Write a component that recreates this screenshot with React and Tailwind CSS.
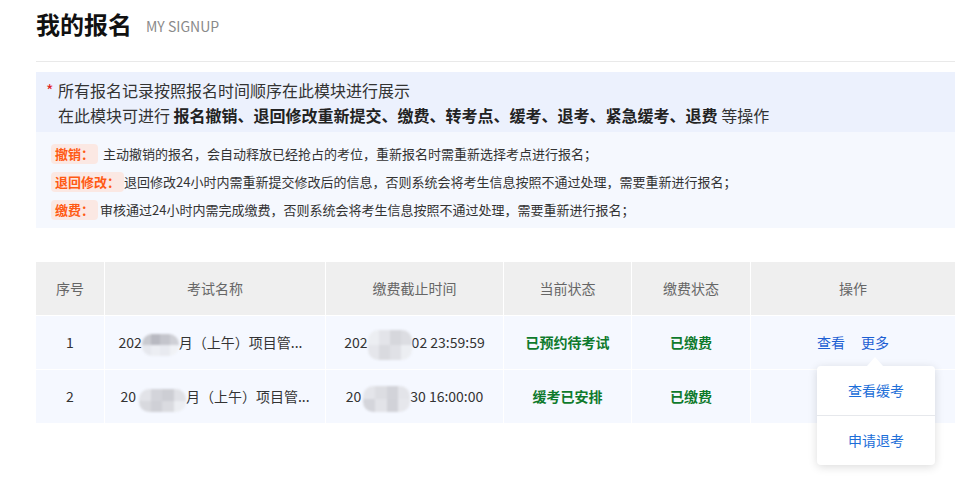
import React from "react";

function Blur({ w, h, cells, className = "" }) {
  return (
    <span
      className={"inline-flex flex-col overflow-hidden rounded-[10px] align-middle blur-[1px] " + className}
      style={{ width: w, height: h }}
    >
      {cells.map((row, i) => (
        <span key={i} className="flex flex-1">
          {row.map((c, j) => (
            <span key={j} className="flex-1" style={{ background: c }} />
          ))}
        </span>
      ))}
    </span>
  );
}

const cols = "grid grid-cols-[68px_221px_178px_128px_119px_205px]";

function Cell({ children, first, className = "" }) {
  return (
    <div
      className={
        "flex items-center justify-center whitespace-nowrap " +
        (first ? "" : "border-l border-white ") +
        className
      }
    >
      {children}
    </div>
  );
}

export default function App() {
  return (
    <div className="min-h-[497px] bg-white pl-[36px] font-['Noto_Sans_CJK_SC',sans-serif] text-[#333]">
      <div className="w-[919px]">
        <div className="flex h-[62px] items-start border-b border-[#e9e9e9] pt-[6px]">
          <h1 className="text-[24px] font-bold leading-[36px] text-[#111]">我的报名</h1>
          <span className="ml-[14px] mt-[2px] text-[14px] leading-[36px] text-[#8a8a8a]">MY SIGNUP</span>
        </div>

        <div className="mt-[10px]">
          <div className="h-[60px] bg-[#ecf1fd] pl-[10px] pt-[6px] text-[16px] leading-[25px] text-[#333]">
            <div className="flex">
              <span className="w-[12px] text-[#e02424]">*</span>
              <span>所有报名记录按照报名时间顺序在此模块进行展示</span>
            </div>
            <div className="pl-[12px]">
              在此模块可进行{" "}
              <span className="font-bold text-[#222]">
                报名撤销、退回修改重新提交、缴费、转考点、缓考、退考、紧急缓考、退费
              </span>{" "}
              等操作
            </div>
          </div>
          <div className="h-[96px] bg-[#f5f8fe] pl-[15px] pt-[8px] text-[13px] leading-[28px] text-[#333]">
            <div className="flex items-center">
              <span className="mr-[5px] inline-block h-[20px] rounded-[4px] bg-[#fbe8e3] px-[4px] text-[13px] font-bold leading-[20px] text-[#ff5a14]">
                撤销：
              </span>
              <span>主动撤销的报名，会自动释放已经抢占的考位，重新报名时需重新选择考点进行报名；</span>
            </div>
            <div className="flex items-center">
              <span className="inline-block h-[20px] rounded-[4px] bg-[#fbe8e3] px-[4px] text-[13px] font-bold leading-[20px] text-[#ff5a14]">
                退回修改：
              </span>
              <span>退回修改24小时内需重新提交修改后的信息，否则系统会将考生信息按照不通过处理，需要重新进行报名；</span>
            </div>
            <div className="flex items-center">
              <span className="mr-[2px] inline-block h-[20px] rounded-[4px] bg-[#fbe8e3] px-[4px] text-[13px] font-bold leading-[20px] text-[#ff5a14]">
                缴费：
              </span>
              <span>审核通过24小时内需完成缴费，否则系统会将考生信息按照不通过处理，需要重新进行报名；</span>
            </div>
          </div>
        </div>

        <div className="relative mt-[34px] text-[14px]">
          <div className={cols + " h-[53px] bg-[#efefef] text-[#666]"}>
            <Cell first>序号</Cell>
            <Cell>考试名称</Cell>
            <Cell>缴费截止时间</Cell>
            <Cell>当前状态</Cell>
            <Cell>缴费状态</Cell>
            <Cell>操作</Cell>
          </div>

          <div className={cols + " h-[54px] border-t border-white bg-[#f5f8ff] text-[#333]"}>
            <Cell first>1</Cell>
            <Cell className="pr-[9px]">
              <span>202</span>
              <Blur
                w={37}
                h={22}
                className="mt-[4px]"
                cells={[
                  ["#c9cad0", "#b8b9c1", "#c4c5cc", "#cfd0d6"],
                  ["#e6e8ee", "#eceef3", "#e8eaf0", "#f0f2f6"],
                ]}
              />
              <span>月（上午）项目管...</span>
            </Cell>
            <Cell>
              <span>202</span>
              <Blur
                w={44}
                h={30}
                className="mt-[4px]"
                cells={[
                  ["#eceef2", "#e3e4e9", "#d6d7dc", "#dcdde2"],
                  ["#e5e6eb", "#d9dadf", "#e0e1e6", "#eceef2"],
                ]}
              />
              <span>02 23:59:59</span>
            </Cell>
            <Cell className="font-semibold text-[#0e7a2c]">已预约待考试</Cell>
            <Cell className="font-semibold text-[#0e7a2c]">已缴费</Cell>
            <Cell className="text-[#1d5fd3]">
              <span>查看</span>
              <span className="ml-[16px]">更多</span>
            </Cell>
          </div>

          <div className={cols + " h-[54px] border-t border-white bg-[#f5f8ff] text-[#333]"}>
            <Cell first>2</Cell>
            <Cell>
              <span>20</span>
              <Blur
                w={47}
                h={23}
                className="ml-[3px] mt-[8px]"
                cells={[
                  ["#e2e3e8", "#d3d4da", "#cdced4", "#e0e1e6"],
                  ["#d8d9de", "#cfd0d6", "#dadbe0", "#eceef2"],
                ]}
              />
              <span>月（上午）项目管...</span>
            </Cell>
            <Cell>
              <span>20</span>
              <Blur
                w={47}
                h={26}
                className="ml-[2px] mt-[4px]"
                cells={[
                  ["#e4e5ea", "#dcdde2", "#d2d3d9", "#e3e4e9"],
                  ["#d4d5db", "#e2e3e8", "#d1d2d8", "#e6e7ec"],
                ]}
              />
              <span>30 16:00:00</span>
            </Cell>
            <Cell className="font-semibold text-[#0e7a2c]">缓考已安排</Cell>
            <Cell className="font-semibold text-[#0e7a2c]">已缴费</Cell>
            <Cell />
          </div>

          <div className="absolute left-[781px] top-[104px] w-[118px] rounded-[4px] bg-white shadow-[0_2px_10px_rgba(0,0,0,0.14)]">
            <div className="absolute left-[50px] top-[-9px] h-0 w-0 border-b-[9px] border-l-[8px] border-r-[8px] border-b-white border-l-transparent border-r-transparent" />
            <div className="flex h-[49px] items-center justify-center text-[14px] text-[#1c6ed8]">查看缓考</div>
            <div className="h-px bg-[#e6e8ec]" />
            <div className="flex h-[49px] items-center justify-center text-[14px] text-[#1c6ed8]">申请退考</div>
          </div>
        </div>
      </div>
    </div>
  );
}
